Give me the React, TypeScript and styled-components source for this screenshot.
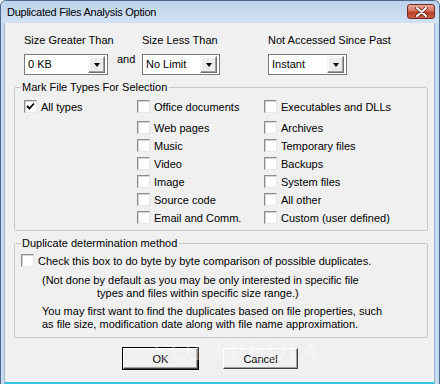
import React from "react";
import styled, { createGlobalStyle } from "styled-components";

const GlobalStyle = createGlobalStyle`
  html, body { margin: 0; padding: 0; background: #f0f0f0; }
  body { font-family: "Liberation Sans", Arial, sans-serif; font-size: 11px; color: #000; }
  * { box-sizing: border-box; }
`;

const Window = styled.div`
  position: relative;
  width: 440px;
  height: 384px;
  display: flex;
  flex-direction: column;
  background: #c6dbf0;
  border: 1px solid #4b6a8c;
  border-bottom: none;
  border-radius: 6px 6px 0 0;
  overflow: hidden;
`;

const TitleBar = styled.div`
  height: 22px;
  flex: none;
  display: flex;
  align-items: center;
  justify-content: space-between;
  padding: 0 4px 0 6px;
  background: linear-gradient(#bdd3ec, #d2e2f3);
`;

const Title = styled.span`
  font-family: "Liberation Sans", Arial, sans-serif;
  font-size: 11px;
  color: #000;
  letter-spacing: -0.25px;
`;

const CloseButton = styled.div`
  width: 28px;
  height: 15px;
  margin-top: -1px;
  border-radius: 3px;
  border: 1px solid #6b2a22;
  background: linear-gradient(#eaa898 0%, #d8735e 45%, #bb3c24 55%, #cc5e42 100%);
  display: flex;
  align-items: center;
  justify-content: center;
`;

const Client = styled.div`
  flex: 1;
  margin: 0 4px 0 3px;
  background: #f0f0f0;
  border-left: 1px solid #9db3cc;
  border-right: 1px solid #9db3cc;
  border-bottom: 2px solid #38c4e0;
  padding: 10px 0 0 9px;
  display: flex;
  flex-direction: column;
`;

const TopRow = styled.div`
  display: flex;
  align-items: flex-start;
  padding-left: 10px;
`;

const Field = styled.div<{ $w: number }>`
  width: ${(p) => p.$w}px;
  display: flex;
  flex-direction: column;
`;

const FieldLabel = styled.div`
  height: 14px;
  line-height: 14px;
  margin-bottom: 7px;
  white-space: nowrap;
`;

const And = styled.div`
  width: 29px;
  padding: 20px 0 0 4px;
`;

const Combo = styled.div<{ $w: number }>`
  width: ${(p) => p.$w}px;
  height: 21px;
  border: 1px solid #7a7a7a;
  background: #fff;
  display: flex;
  align-items: center;
  padding: 2px;
`;

const ComboText = styled.span`
  flex: 1;
  padding-left: 1px;
  line-height: 15px;
`;

const ComboButton = styled.div`
  width: 17px;
  height: 17px;
  background: #ececec;
  border-top: 1px solid #f4f4f4;
  border-left: 1px solid #f4f4f4;
  border-right: 1px solid #707070;
  border-bottom: 1px solid #707070;
  box-shadow: inset -1px -1px 0 #a0a0a0, inset 1px 1px 0 #ffffff;
  display: flex;
  align-items: center;
  justify-content: center;
`;

const Arrow = styled.div`
  width: 0;
  height: 0;
  border-left: 3.5px solid transparent;
  border-right: 3.5px solid transparent;
  border-top: 4px solid #000;
  margin-top: 1px;
`;

const Group = styled.fieldset<{ $h: number }>`
  margin: 0;
  width: 414px;
  height: ${(p) => p.$h}px;
  border: 1px solid #c8c8c8;
  border-radius: 2px;
  padding: 0;
  min-width: 0;
`;

const Legend = styled.legend`
  padding: 0 2px 0 1px;
  margin-left: 6px;
  line-height: 13px;
`;

const TypesGrid = styled.div`
  display: grid;
  grid-template-columns: 113px 127px 140px;
  grid-template-rows: 21px repeat(6, 18px);
  padding: 6px 0 0 9px;
`;

const CheckRow = styled.label`
  display: flex;
  align-items: center;
  gap: 4px;
  height: 13px;
  white-space: nowrap;
`;

const Box = styled.span`
  width: 13px;
  height: 13px;
  flex: none;
  background: #fff;
  border-top: 1px solid #8c8c8c;
  border-left: 1px solid #8c8c8c;
  border-right: 1px solid #e6e6e6;
  border-bottom: 1px solid #e6e6e6;
  box-shadow: inset 1px 1px 0 #d4d4d4;
  display: flex;
  align-items: center;
  justify-content: center;
`;

const MethodBody = styled.div`
  padding: 4px 0 0 6px;
  display: flex;
  flex-direction: column;
`;

const Note = styled.div<{ $indent: number; $gap: number }>`
  padding-left: ${(p) => p.$indent}px;
  margin-top: ${(p) => p.$gap}px;
  line-height: 13px;
  white-space: nowrap;
`;

const ButtonRow = styled.div`
  display: flex;
  gap: 25px;
  padding: 10px 0 0 109px;
`;

const Button = styled.div<{ $default?: boolean }>`
  width: 75px;
  height: 21px;
  display: flex;
  align-items: center;
  justify-content: center;
  background: #f0f0f0;
  border-top: 1px solid #ffffff;
  border-left: 1px solid #ffffff;
  border-right: 1px solid #404040;
  border-bottom: 1px solid #404040;
  box-shadow: inset -1px -1px 0 #a0a0a0;
  outline: ${(p) => (p.$default ? "1px solid #000" : "none")};
`;

const Watermark = styled.div`
  position: absolute;
  left: 152px;
  top: 334px;
  font-family: "Liberation Serif", serif;
  font-size: 28px;
  letter-spacing: 2px;
  color: rgba(255, 255, 255, 0.35);
  pointer-events: none;
`;

const Check = ({ checked }: { checked?: boolean }) => (
  <Box>
    {checked && (
      <svg width="9" height="9" viewBox="0 0 9 9">
        <path d="M1 4 L3.5 6.5 L8 1.5" stroke="#000" strokeWidth="1.8" fill="none" />
      </svg>
    )}
  </Box>
);

const Item = ({ label, checked, col, row }: { label: string; checked?: boolean; col: number; row: number }) => (
  <CheckRow style={{ gridColumn: col, gridRow: row }}>
    <Check checked={checked} />
    <span>{label}</span>
  </CheckRow>
);

const col2 = ["Office documents", "Web pages", "Music", "Video", "Image", "Source code", "Email and Comm."];
const col3 = ["Executables and DLLs", "Archives", "Temporary files", "Backups", "System files", "All other", "Custom (user defined)"];

export default function App() {
  return (
    <>
      <GlobalStyle />
      <Window>
        <TitleBar>
          <Title>Duplicated Files Analysis Option</Title>
          <CloseButton>
            <svg width="13" height="10" viewBox="0 0 13 10">
              <path d="M2 1 L11 9 M11 1 L2 9" stroke="#5a1a10" strokeWidth="3.4" strokeLinecap="round" />
              <path d="M2 1 L11 9 M11 1 L2 9" stroke="#fff" strokeWidth="2" strokeLinecap="round" />
            </svg>
          </CloseButton>
        </TitleBar>
        <Client>
          <TopRow>
            <Field $w={89}>
              <FieldLabel>Size Greater Than</FieldLabel>
              <Combo $w={84}>
                <ComboText>0 KB</ComboText>
                <ComboButton><Arrow /></ComboButton>
              </Combo>
            </Field>
            <And>and</And>
            <Field $w={126}>
              <FieldLabel>Size Less Than</FieldLabel>
              <Combo $w={78}>
                <ComboText>No Limit</ComboText>
                <ComboButton><Arrow /></ComboButton>
              </Combo>
            </Field>
            <Field $w={130}>
              <FieldLabel>Not Accessed Since Past</FieldLabel>
              <Combo $w={79}>
                <ComboText>Instant</ComboText>
                <ComboButton><Arrow /></ComboButton>
              </Combo>
            </Field>
          </TopRow>
          <Group $h={150} style={{ marginTop: 6 }}>
            <Legend>Mark File Types For Selection</Legend>
            <TypesGrid>
              <Item label="All types" checked col={1} row={1} />
              {col2.map((l, i) => (
                <Item key={l} label={l} col={2} row={i + 1} />
              ))}
              {col3.map((l, i) => (
                <Item key={l} label={l} col={3} row={i + 1} />
              ))}
            </TypesGrid>
          </Group>
          <Group $h={101} style={{ marginTop: 6 }}>
            <Legend>Duplicate determination method</Legend>
            <MethodBody>
              <CheckRow>
                <Check />
                <span>Check this box to do byte by byte comparison of possible duplicates.</span>
              </CheckRow>
              <Note $indent={21} $gap={7}>(Not done by default as you may be only interested in specific file</Note>
              <Note $indent={76} $gap={0}>types and files within specific size range.)</Note>
              <Note $indent={21} $gap={5}>You may first want to find the duplicates based on file properties, such</Note>
              <Note $indent={21} $gap={0}>as file size, modification date along with file name approximation.</Note>
            </MethodBody>
          </Group>
          <ButtonRow>
            <Button $default>OK</Button>
            <Button>Cancel</Button>
          </ButtonRow>
        </Client>
        <Watermark>SOFTPEDIA</Watermark>
      </Window>
    </>
  );
}
